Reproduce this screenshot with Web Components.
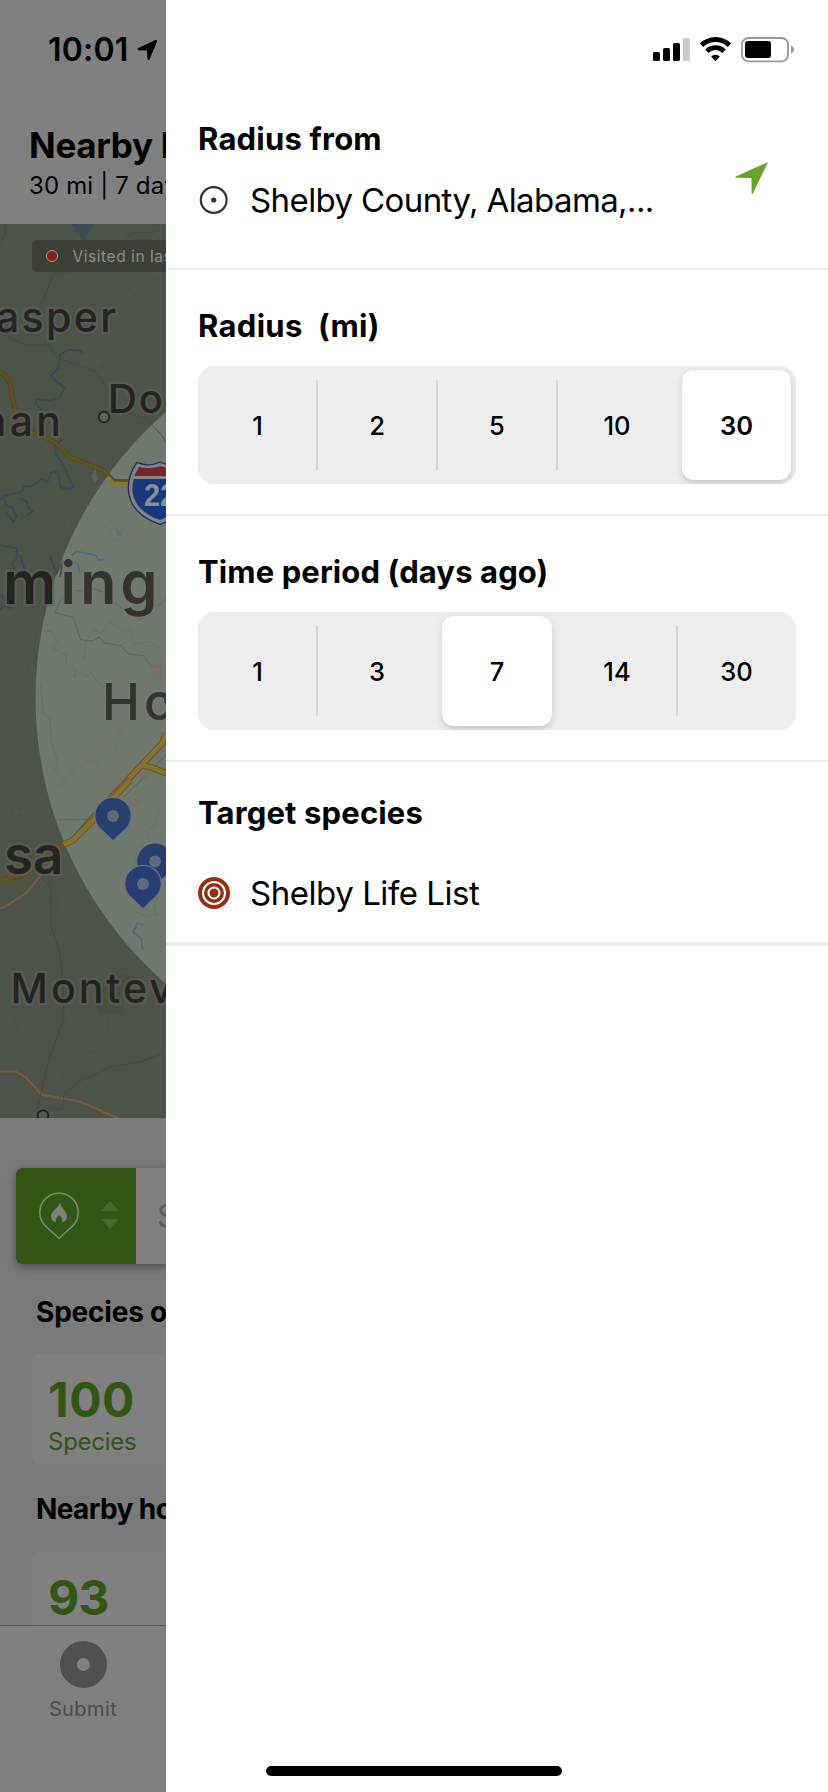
<!DOCTYPE html>
<html lang="en">
<head>
<meta charset="utf-8">
<title>Explore filters</title>
<style>
html,body{margin:0;padding:0}
body{width:828px;height:1792px;overflow:hidden;background:#fff;font-family:Inter,"Liberation Sans",sans-serif;color:#000}
</style>
</head>
<body>
<explore-screen></explore-screen>
<script>
const define=(name,html)=>customElements.define(name,class extends HTMLElement{
  constructor(){super();this.attachShadow({mode:"open"}).innerHTML=html;}
});

/* Map behind the drawer */
define("hotspot-map",`
<style>
:host{display:block;height:894px;position:relative;flex:none}
svg{display:block}
.halo text{paint-order:stroke;stroke:#5f605d;stroke-width:5px;stroke-opacity:.6;stroke-linejoin:round;fill:#252422}
.halo .in{fill:#353331;stroke:#757873}
.legend{position:absolute;left:32px;top:16px;width:134px;height:32px;border-radius:6px 0 0 6px;background:rgba(50,52,46,.58);display:flex;align-items:center;color:#8b8d89;font-size:15.5px;letter-spacing:.55px;white-space:nowrap;overflow:hidden}
.legend i{flex:none;width:10px;height:10px;border-radius:50%;background:#86210f;border:1px solid #999;margin:0 14.5px 0 14px}
</style>
<svg width="166" height="894" viewBox="0 224 166 894" fill="none">
  <rect y="224" width="166" height="894" fill="#4c5347"/>
  <circle cx="414.1" cy="698" r="378.6" fill="#6f796d"/>
  <g transform="translate(0,220) scale(.33333)">
    <path d="M210 12l16 16-10 6 22 4 4 14 14 12 4-22 12-12 8-18Z" fill="#3c4c57"/>
    <path d="M372 230l30-34 30-10 30-34 28-16-16 30-40 22-24 20-20 20ZM290 365l16 10-4 20 8 20-14 24-22-14 6-30Z" fill="#55544b" fill-opacity=".7"/>
    <path d="M14 12l2 36-16 18M498 20l-36 17h-64l-62 63-12 31-28 11-138 22-28 78-46 50-70 22-24 10M0 340l77 36h72l22 38 114 40 42 60M370 575l64 20 50 48 14 25" stroke="#464447" stroke-width="2"/>
    <path d="M0 68l36 48 42 26-6 40 28 60 18 0 8 50M410 30l-14 60-40 20 10 60-24 50 14 50-16 40 24 50-40 20 44 30-14 30-60 2M0 500l50 10 30-8 36 10" stroke="#485051" stroke-width="2"/>
    <path d="M248 400l-6-8-38-2-24 14-4 40-24 22 12 14 30 24-16 30-28 8-40-4-4 10 14 20 26 4M186 658l-18 16-2 30 20 22 22 50 14 24-14 8-26-6-8-46-20 0-10 28-22-6-26 22-24-2-8 20-30 4-24 8M0 835l12 2 6 18 20 10 12 24-10 16-24-30M60 836l20 8 4 20 16 8-20 14" stroke="#374a56" stroke-width="5" stroke-linejoin="round"/>
    <path d="M0 458l14 6 14 22 20 92 30 52 40 16 46 20 44 44 104 42 30 32h60" stroke="#5b4324" stroke-width="13"/>
    <path d="M0 458l14 6 14 22 20 92 30 52 40 16 46 20 44 44 104 42 30 32h60" stroke="#5f541c" stroke-width="9"/>
    <path d="M322 770l20 20h60" stroke="#867630" stroke-width="10"/>
    <path d="M498 692l-22 4-20 20 14 20 28 4M498 830l-30 24-50 2-40 16-24-4-12 36-30 14 20 14 4 30 36-6 36 22 30-20" stroke="#667274" stroke-width="2"/>
    <path d="M346 920l12 14 12-10-4 26-14-4Z" fill="#52768a"/>
    <path d="M380 930l30-20 20 30-24 20-26-6ZM342 870l14-14 12 22-20 14ZM276 770l10-24 8 30-10 16Z" fill="#78786b" fill-opacity=".4"/>
    <path d="M190 910l10-14 16 24-14 6Z" fill="#55544b" fill-opacity=".7"/>
    <circle cx="312" cy="591" r="16" fill="#626361" stroke="#20201e" stroke-width="5"/>
  </g>
  <g transform="translate(0,540) scale(.33333)">
    <path d="M0 15l50 10 0 30-14 14 14 40M60 45l20 60M0 165l24 20M0 208l14-12 20 10M150 50l20 50 20-40-10 50" stroke="#374a56" stroke-width="5"/>
    <path d="M215 48l14-14 58 12 10 14 14-2M240 100l-8-30-30-10" stroke="#4f6c7b" stroke-width="5"/>
    <path d="M208 155l-26 26-18 36 56 16 22 66 36 4 20-12 14 18 52 8 18 24 48 6 24 34 44-4M230 152h16l20-10 44 14M345 190l70 48 20-4M498 175l-24 24M0 860l50-42 30-8 80 30 120-2" stroke="#555a53" stroke-width="2"/>
    <path d="M498 645l-130 130" stroke="#55564f" stroke-width="2"/>
    <path d="M40 250l10 30 40 0-16 50-20 10 30 40-4 40 20-20 10-120M0 730l60 80-10 40" stroke="#455050" stroke-width="2"/>
    <path d="M124 276l30-2 20 30-16 20 40 20 0 26 30 20-8 24 20-16 24 14 10-20 14 30 20 16 2 20M250 360l10-60 20-30 24 10 24-36 40 30 24-10 10 50 50-10 20 20 26 0M120 430l10 90 20 14 4 70 20 60-10 24 26 30" stroke="#616d6c" stroke-width="2"/>
    <path d="M340 570l26-8 10 20-14 10-14 46-10-24ZM150 745l26-8 44-54 30-14 16-24 6-24 8 28 24 14-8 30-30-24-30 14-50 60Z" fill="#757466" fill-opacity=".8"/>
    <path d="M450 380l30-18 18 6v60l-30-10ZM460 640l20-20 18 10-24 30ZM410 700l30-14 20 10-26 26ZM370 800l34-24 30 6-26 20Z" fill="#776f6a" fill-opacity=".6"/>
    <path d="M498 580l-10 28-68 72-120 130-80 90M425 676l30 6 36 15h20" stroke="#6d4d30" stroke-width="20"/>
    <path d="M498 580l-10 28-68 72-120 130-80 90M425 676l30 6 36 15h20" stroke="#85752f" stroke-width="14"/>
  </g>
  <g transform="translate(0,780) scale(.33333)">
    <path d="M390 0L280 120l-60 60-30 14" stroke="#72512f" stroke-width="20"/>
    <path d="M390 0L280 120l-60 60-30 14" stroke="#85752f" stroke-width="14"/>
    <path d="M190 194l-60 46-60 44-70 18" stroke="#60491e" stroke-width="18"/>
    <path d="M190 194l-60 46-60 44-70 18" stroke="#62541b" stroke-width="12"/>
    <path d="M150 250l-28 36-44 54-66 42-12 2M0 874h46l32 18 47 52 105 19 34 12 90 40" stroke="#634a34" stroke-width="13"/>
    <path d="M150 250l-28 36-44 54-66 42-12 2M0 874h46l32 18 47 52 105 19 34 12 90 40" stroke="#646151" stroke-width="7"/>
    <path d="M126 286l28 46v112l20 54 12 60 6 160-46 120-22 96-16 80M108 970l40 18h38l6-46 50-40 90-42 90-14 60-24 14-16" stroke="#464147" stroke-width="2"/>
    <path d="M140 290l34 60-14 90 30 26 24 6 60 90 20-6M0 30l30 40 10 30M0 670l40 30 20 60 50 10 30 40 50 60-16 120M200 860l40-34 60-14 10-40 20-10-10-40 30-40M370 720l30 30 20-10 20 40 30 0M0 940l40 60" stroke="#45504c" stroke-width="2"/>
    <path d="M498 80l-24 12-6 40-30 20 10 30-36 20-10 60M400 390l24 14 46 0-10-40" stroke="#62706a" stroke-width="2"/>
    <path d="M432 434l-20-4-12 26 24 22 4 32" stroke="#526d7a" stroke-width="6"/>
    <path d="M292 640l60-60 60 10-40 60v54h-80Z" fill="#434d3e" fill-opacity=".5"/>
    <circle cx="129" cy="1007" r="16" fill="#555655" stroke="#20201e" stroke-width="5"/>
  </g>
  <g class="halo" font-weight="500">
    <text x="-4" y="332" font-size="41" textLength="120" stroke="none">asper</text>
    <text x="-30" y="436" font-size="41" textLength="91">man</text>
    <text x="108" y="413" font-size="40" letter-spacing="2">Do</text>
    <text x="3" y="604" font-size="59" font-weight="600" letter-spacing="4.300"><tspan>m</tspan><tspan class="in" fill="#353331">ing</tspan></text>
    <text class="in" x="102" y="720" font-size="51" letter-spacing="4">Ho</text>
    <text x="4" y="874" font-size="53" font-weight="600" letter-spacing="0">sa</text>
    <text x="10.500" y="1003" font-size="41" letter-spacing="3">Montev</text>
  </g>
  <circle cx="171" cy="700" r="7" fill="#24396c"/>
  <g transform="translate(0,220) scale(.33333)">
    <path d="M411 727c22 10 46 10 69-1 23 11 47 11 69 1 16 22 26 48 26 76 0 56-40 92-95 110-55-18-95-54-95-110 0-28 10-54 26-76Z" fill="#808387" stroke="#292f55" stroke-width="4"/>
    <path d="M403 768l14-28c22 6 42 6 63-1 21 7 41 7 63 1l14 28Z" fill="#78242a"/>
    <path d="M401 777h158c2 9 4 18 4 28 0 46-34 78-83 95-49-17-83-49-83-95 0-10 2-19 4-28Z" fill="#17387a"/>
  </g>
  <text x="144" y="505.500" font-size="31" font-weight="700" fill="#8b8e93" font-family="Liberation Sans,sans-serif" textLength="32" lengthAdjust="spacingAndGlyphs">22</text>
  <g fill="#283d70" stroke="#6e747c" stroke-width="1.300">
    <path d="M155 886.500l-12.800-12.200a18.300 18.300 0 1 1 25.600 0Z"/><circle cx="155" cy="861.500" r="6" fill="#60697a" stroke="none"/>
    <path d="M113 841l-12.800-12.200a18.300 18.300 0 1 1 25.600 0Z"/><circle cx="113" cy="816" r="6" fill="#60697a" stroke="none"/>
    <path d="M143 909l-12.800-12.200a18.300 18.300 0 1 1 25.600 0Z"/><circle cx="143" cy="884" r="6" fill="#60697a" stroke="none"/>
  </g>
</svg>
<div class="legend"><i></i><span>Visited in las</span></div>`);

define("search-bar",`
<style>
:host{display:flex;flex:none;margin:50px 0 0 16px;width:796px;height:96px;border-radius:6px;background:#808080;box-shadow:0 3px 8px rgba(0,0,0,.36);overflow:hidden}
.kind{width:120px;background:#325614}
.q{padding-left:21px;line-height:96px;font-size:31px;color:#5c5c5c;white-space:nowrap}
svg{display:block}
</style>
<div class="kind"><svg width="120" height="96" viewBox="0 0 120 96">
<path d="M43 70.500L29 57.500a19.200 19.200 0 1 1 28 0Z" fill="none" stroke="#7f8c73" stroke-width="1.500"/>
<path d="M44.300 33.500c-.5 3 1 4.700 3.500 8 2 2.700 3.300 5 3.100 7.500-.2 3-2 4.900-4.800 5.200.5-3-.6-5.400-3.100-7.200-2.500 1.800-3.600 4.200-3.100 7.200-3-.4-4.900-2.600-4.900-6 0-6 8-7.500 9.300-14.700Z" fill="#808080"/>
<path d="M85 43l9-10 9 10ZM85 51h18l-9 10Z" fill="#4a6733"/></svg></div>
<div class="q">S</div>`);

define("stat-card",`
<style>
:host{display:block;box-sizing:border-box;flex:none;margin-left:32px;width:764px;height:110px;border-radius:6px;background:#808080;padding:18px 0 0 16px;color:#325614;white-space:nowrap}
.n{font-size:48px;font-weight:700;line-height:56px;letter-spacing:var(--num-track,0)}
.l{font-size:24px;line-height:28px;letter-spacing:-.25px}
</style>
<div class="n"><slot name="value"></slot></div><div class="l"><slot></slot></div>`);

define("explore-page",`
<style>
:host{display:flex;flex-direction:column;width:166px;height:1792px;overflow:hidden;background:#7a7a7a;position:relative}
header{background:#808080;height:224px;flex:none;box-sizing:border-box;padding:122px 0 0 29px;white-space:nowrap}
h1{margin:0;font-size:35px;line-height:46px;font-weight:700;letter-spacing:-.3px}
p{margin:2px 0 0;font-size:24px;line-height:32px;letter-spacing:.15px}
h2{margin:0 0 0 36px;font-size:28px;line-height:34px;font-weight:700;white-space:nowrap;flex:none}
.a{margin-top:31px;margin-bottom:25px;letter-spacing:-.2px}.b{margin-top:28px;margin-bottom:26px;letter-spacing:-.6px}
.first{--num-track:.5px}.second{--num-track:-.7px}
.clip{height:73px;overflow:hidden;flex:none}
nav{flex:none;width:828px;height:167px;box-sizing:border-box;background:#808080;border-top:1px solid #555;padding:15px 0 0 49px}
.tab{width:68px;display:flex;flex-direction:column;align-items:center;color:#4d4d4d;font-size:20px;line-height:24px;letter-spacing:.4px}
.tab i{box-sizing:border-box;width:47px;height:47px;border:17.5px solid #505050;border-radius:50%;margin-bottom:9px}
</style>
<header><h1>Nearby h</h1><p>30 mi | 7 day</p></header>
<hotspot-map></hotspot-map>
<search-bar></search-bar>
<h2 class="a">Species o</h2>
<stat-card class="first"><span slot="value">100</span>Species</stat-card>
<h2 class="b">Nearby ho</h2>
<div class="clip"><stat-card class="second"><span slot="value">93</span></stat-card></div>
<nav><div class="tab"><i></i><span>Submit</span></div></nav>`);

define("panel-section",`
<style>
:host{display:block;box-sizing:border-box;border-bottom:2px solid #ececec;padding:0 32px}
h3{margin:0;font-size:31px;line-height:40px;font-weight:700;letter-spacing:var(--track,.2px);white-space:pre}
</style>
<h3><slot name="title"></slot></h3><slot></slot>`);

define("choice-row",`
<style>
:host{display:flex;align-items:center;height:40px;font-size:33px;white-space:nowrap;letter-spacing:var(--row-track,0)}
::slotted(svg){flex:none;display:block;width:32px;height:32px;margin-right:20px}
</style>
<slot name="icon"></slot><slot></slot>`);

/* Segmented control: options="a,b,c" selected="b" */
customElements.define("segment-control",class extends HTMLElement{
  connectedCallback(){
    const root=this.attachShadow({mode:"open"}),o=this.getAttribute("options").split(","),s=o.indexOf(this.getAttribute("selected"));
    root.innerHTML=`<style>
:host{display:grid;grid-template-columns:119px repeat(3,120px) 119px;width:598px;height:118px;border-radius:16px;background:#ededed;overflow:hidden;font-size:25.500px;font-weight:500}
div{position:relative;display:flex;align-items:center;justify-content:center}
div:first-child{padding-right:1px}
.line::after{content:"";position:absolute;right:-1px;top:14px;width:2px;height:90px;background:#d5d5d5}
.on{margin:4px 5px 4px 5px;border-radius:12px;background:#fff;box-shadow:0 3px 8px rgba(0,0,0,.13),0 3px 2px rgba(0,0,0,.04);z-index:1}
.bold{font-weight:600}
</style>`+o.map((v,i)=>`<div class="${i===s?"on":""} ${i===s&&i===4?"bold":""} ${i<4&&i!==s&&i+1!==s?"line":""}">${v}</div>`).join("");
  }
});

define("filter-panel",`
<style>
:host{display:block;width:662px;height:1792px;background:#fff;box-sizing:border-box;padding-top:119px}
.from{height:151px;position:relative;--row-track:-.6px;--track:.2px}
.from choice-row{margin-top:21px}
.arrow{position:absolute;left:569px;top:42px}
.radius{height:246px;padding-top:36px;--track:.3px}
.time{height:246px;padding-top:36px;--track:.1px}
segment-control{margin-top:20px}
.target{height:184px;padding-top:31px;border-bottom-width:4px;--row-track:-.45px;--track:.15px}
.target choice-row{margin-top:40px}
</style>
<panel-section class="from"><span slot="title">Radius from</span>
<choice-row><svg slot="icon" viewBox="0 0 32 32"><circle cx="15.700" cy="16" r="12.900" fill="none" stroke="#333" stroke-width="2.200"/><circle cx="15.700" cy="16" r="2.600" fill="#333"/></svg>Shelby County, Alabama,...</choice-row>
<svg class="arrow" width="34" height="33" viewBox="0 0 34 33"><path d="M33 1L.3 15.700v1.100l16.200.2.200 16h1Z" fill="#64a52e"/></svg>
</panel-section>
<panel-section class="radius"><span slot="title">Radius&nbsp; (mi)</span><segment-control options="1,2,5,10,30" selected="30"></segment-control></panel-section>
<panel-section class="time"><span slot="title">Time period (days ago)</span><segment-control options="1,3,7,14,30" selected="7"></segment-control></panel-section>
<panel-section class="target"><span slot="title">Target species</span>
<choice-row><svg slot="icon" viewBox="0 0 32 32"><circle cx="16" cy="16" r="16" fill="#942f13"/><circle cx="16" cy="16" r="11" fill="none" stroke="#fff" stroke-width="2"/><circle cx="16" cy="16" r="5.500" fill="none" stroke="#fff" stroke-width="2"/></svg>Shelby Life List</choice-row></panel-section>`);

define("status-bar",`
<style>
:host{display:flex;position:absolute;left:0;top:0;width:828px;height:100px;box-sizing:border-box;padding:30px 34px 0 48px;align-items:flex-start}
b{font-size:32px;line-height:40px;font-weight:600;letter-spacing:.2px;width:89px;white-space:nowrap}
.icons{margin-left:auto}
</style>
<b>10:01</b>
<svg width="22" height="34" viewBox="137 30 22 34"><path d="M155.500 40c1-.4 1.900.4 1.500 1.500l-7.300 17.500c-.5 1.300-2.300 1.200-2.400-.3l-.2-8.200-8.300-.2c-1.500-.1-1.700-1.900-.4-2.400Z"/></svg>
<svg class="icons" width="142" height="34" viewBox="652 30 142 34">
<rect x="653" y="52" width="7" height="9" rx="1.600"/><rect x="663" y="48" width="7" height="13" rx="1.600"/><rect x="673" y="43" width="7" height="18" rx="1.600"/><rect x="683" y="38" width="7" height="23" rx="1.600" fill="#ccc"/>
<g fill="none" stroke="#000" stroke-width="4.800"><path d="M701.500 45.300a19.800 19.800 0 0 1 28 0"/><path d="M706.900 51.200a12.300 12.300 0 0 1 17.200 0"/></g><path d="M711.100 56.500a6.500 6.500 0 0 1 8.800 0l-4.400 4.700Z"/>
<rect x="742" y="38" width="46" height="23.300" rx="6.500" fill="none" stroke="#999" stroke-width="1.800"/><rect x="745" y="41" width="26" height="17" rx="3"/><path d="M791 45.500c4 1.500 4 6.500 0 8Z" fill="#999"/></svg>`);

define("explore-screen",`
<style>
:host{display:grid;grid-template-columns:166px 662px;position:relative;width:828px;height:1792px;overflow:hidden}
.home{position:absolute;left:266px;top:1766px;width:296px;height:10px;border-radius:5px;background:#000}
</style>
<explore-page></explore-page><filter-panel></filter-panel><status-bar></status-bar><div class="home"></div>`);
</script>
</body>
</html>
